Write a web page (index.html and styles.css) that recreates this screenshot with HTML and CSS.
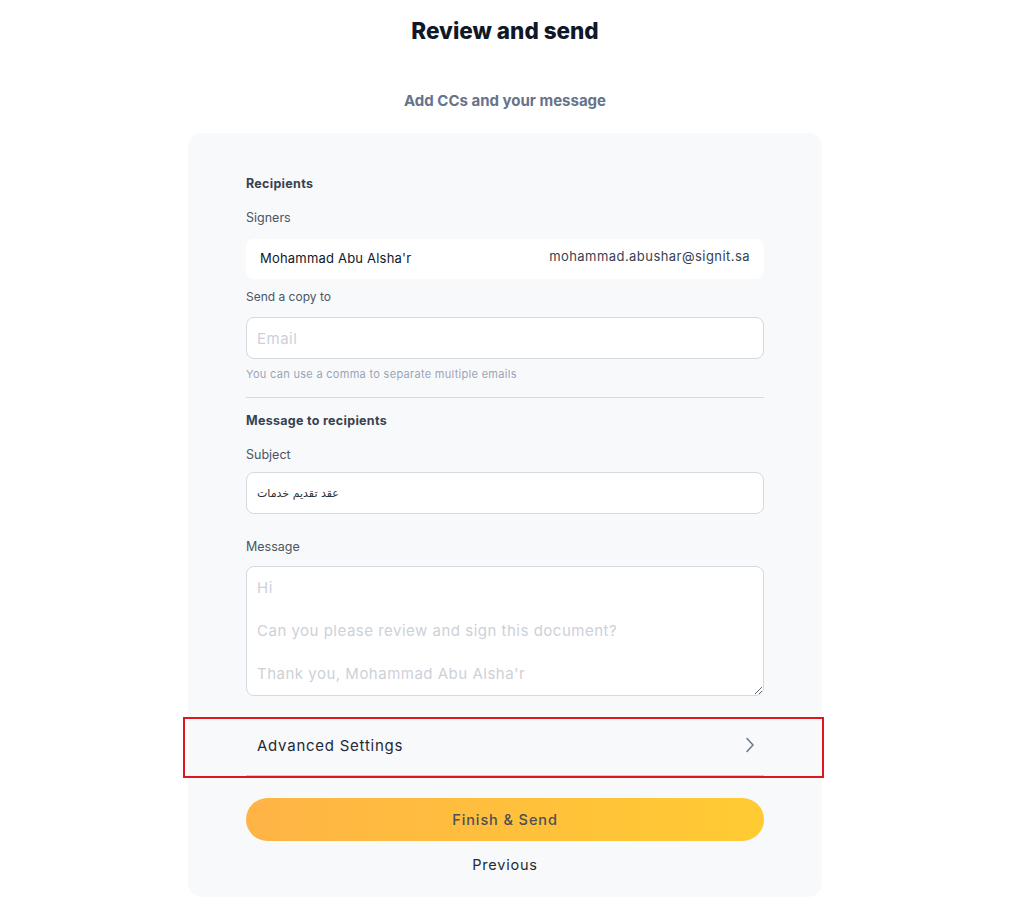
FILE: index.html
```html
<!DOCTYPE html>
<html lang="en">
<head>
<meta charset="utf-8">
<title>Review and send</title>
<link rel="stylesheet" href="styles.css">
</head>
<body>
<main class="page">
  <h1 class="title">Review and send</h1>
  <p class="subtitle">Add CCs and your message</p>
  <section class="card">
    <h2 class="section-title">Recipients</h2>
    <div class="label">Signers</div>
    <div class="signer">
      <span class="signer-name">Mohammad Abu Alsha'r</span>
      <span class="signer-email">mohammad.abushar@signit.sa</span>
    </div>
    <div class="label label-copy">Send a copy to</div>
    <input class="field" type="text" placeholder="Email">
    <div class="hint">You can use a comma to separate multiple emails</div>
    <hr class="divider">
    <h2 class="section-title">Message to recipients</h2>
    <div class="label">Subject</div>
    <input class="field field-subject" type="text" value="عقد تقديم خدمات">
    <div class="label label-message">Message</div>
    <textarea class="field textarea" placeholder="Hi

Can you please review and sign this document?

Thank you, Mohammad Abu Alsha'r"></textarea>
    <div class="highlight">
      <div class="advanced">
        <span>Advanced Settings</span>
        <svg class="chevron" width="10" height="16" viewBox="0 0 10 16"><path d="M2 1.5 L8 8 L2 14.5" fill="none" stroke="#6b7688" stroke-width="1.5" stroke-linecap="round" stroke-linejoin="round"/></svg>
      </div>
    </div>
    <button class="primary" type="button">Finish &amp; Send</button>
    <button class="secondary" type="button">Previous</button>
  </section>
</main>
</body>
</html>
```
FILE: styles.css
```css
* { box-sizing: border-box; }
html, body { margin: 0; padding: 0; background: #ffffff; }
body { font-family: Inter, "Open Sans", "DejaVu Sans", sans-serif; color: #1f2937; }

.page {
  width: 1010px;
  display: flex;
  flex-direction: column;
  align-items: center;
  padding-top: 17px;
}
.title {
  margin: 0;
  font-size: 22.5px;
  line-height: 28px;
  font-weight: 800;
  color: #101828;
}
.subtitle {
  margin: 46px 0 0;
  font-size: 15px;
  line-height: 20px;
  font-weight: 700;
  color: #667389;
}
.card {
  margin-top: 22px;
  width: 634px;
  background: #f8f9fb;
  border-radius: 14px;
  padding: 42px 58px 20px;
  display: flex;
  flex-direction: column;
}
.section-title {
  margin: 0;
  font-size: 12.5px;
  line-height: 18px;
  font-weight: 700;
  letter-spacing: 0.3px;
  color: #374151;
}
.label {
  margin-top: 16px;
  font-size: 12.5px;
  line-height: 18px;
  color: #4b5563;
}
.signer {
  margin-top: 12px;
  height: 40px;
  background: #ffffff;
  border-radius: 8px;
  display: flex;
  align-items: center;
  justify-content: space-between;
  padding: 0 14px 0 14px;
  font-size: 13px;
  color: #111827;
}
.signer-name { margin-top: -2px; letter-spacing: 0.2px; }
.signer-email { margin-top: -6px; color: #374151; letter-spacing: 0.45px; }
.label-copy { margin-top: 9px; font-size: 12px; }
.field {
  margin-top: 11px;
  width: 100%;
  height: 42px;
  border: 1px solid #d5d9e0;
  border-radius: 8px;
  background: #ffffff;
  padding: 0 10px;
  font-family: inherit;
  font-size: 15px;
  letter-spacing: 0.5px;
  color: #111827;
  outline: none;
}
.field::placeholder { color: #ccd1d9; }
.field-subject {
  margin-top: 8px;
  font-family: "DejaVu Sans", sans-serif;
  font-size: 11px;
  letter-spacing: 0;
  color: #2b2f36;
}
.hint {
  margin-top: 7px;
  font-size: 11px;
  line-height: 16px;
  letter-spacing: 0.3px;
  color: #9aa4b8;
}
.divider {
  margin: 15px 0 0;
  border: 0;
  border-top: 1px solid #d5d9e0;
}
.divider + .section-title { margin-top: 14px; }
.label-message { margin-top: 24px; }
.textarea {
  margin-top: 10px;
  height: 130px;
  padding: 10px 10px;
  line-height: 21.5px;
  resize: vertical;
  display: block;
}
.highlight {
  margin: 21px -60px 0 -63px;
  padding: 0 58px 0 61px;
  border: 2px solid #e0161e;
}
.advanced {
  height: 57px;
  display: flex;
  align-items: center;
  justify-content: space-between;
  padding: 0 9px 4px 11px;
  border-bottom: 1px solid #c9d0dc;
  font-size: 15px;
  letter-spacing: 0.75px;
  color: #1f2937;
}
.chevron { display: block; }
.primary {
  margin-top: 20px;
  height: 43px;
  width: 100%;
  border: 0;
  border-radius: 22px;
  background: linear-gradient(90deg, #ffb446 0%, #ffcb32 100%);
  font-family: inherit;
  font-size: 14.5px;
  font-weight: 500;
  letter-spacing: 0.9px;
  color: #4b4f57;
  cursor: pointer;
}
.secondary {
  margin: 11px auto 0;
  border: 0;
  background: none;
  font-family: inherit;
  font-size: 14.5px;
  letter-spacing: 0.8px;
  color: #1f2937;
  padding: 4px 10px;
  cursor: pointer;
}
```
